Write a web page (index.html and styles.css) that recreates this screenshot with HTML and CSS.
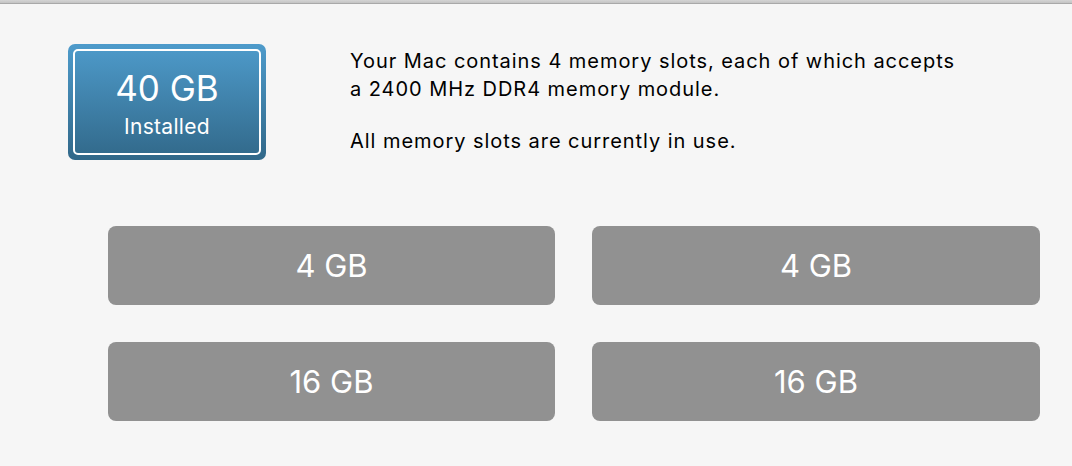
FILE: index.html
```html
<!DOCTYPE html>
<html>
<head>
<meta charset="utf-8">
<link rel="stylesheet" href="styles.css">
</head>
<body>
<div class="topbar"></div>
<main class="content">
  <section class="summary">
    <div class="badge">
      <div class="badge-inner">
        <div class="badge-size">40 GB</div>
        <div class="badge-label">Installed</div>
      </div>
    </div>
    <div class="info">
      <p>Your Mac contains 4 memory slots, each of which accepts<br>a 2400 MHz DDR4 memory module.</p>
      <p>All memory slots are currently in use.</p>
    </div>
  </section>
  <section class="slots">
    <div class="slot">4 GB</div>
    <div class="slot">4 GB</div>
    <div class="slot">16 GB</div>
    <div class="slot">16 GB</div>
  </section>
</main>
</body>
</html>
```
FILE: styles.css
```css
html, body {
  margin: 0;
  padding: 0;
  background: #f6f6f6;
  font-family: "Inter", "Liberation Sans", sans-serif;
}
.topbar {
  height: 3px;
  background: linear-gradient(#d4d4d4, #c4c4c4);
  border-bottom: 1px solid #a9a9a9;
}
.content {
  padding: 40px 0 0 68px;
}
.summary {
  display: flex;
  align-items: flex-start;
  gap: 84px;
}
.badge {
  width: 198px;
  height: 116px;
  box-sizing: border-box;
  border-radius: 7px;
  background: linear-gradient(#4e9bcb, #316889);
  padding: 5px;
  flex: none;
}
.badge-inner {
  height: 100%;
  box-sizing: border-box;
  border: 2px solid #ffffff;
  border-radius: 5px;
  display: flex;
  flex-direction: column;
  align-items: center;
  color: #fff;
  padding-top: 17px;
}
.badge-size {
  font-size: 35px;
  line-height: 40px;
}
.badge-label {
  font-size: 21px;
  line-height: 26px;
  letter-spacing: 0.3px;
  margin-top: 6px;
}
.info {
  padding-top: 3px;
  color: #000;
  font-size: 20px;
  letter-spacing: 0.95px;
  line-height: 28px;
}
.info p {
  margin: 0 0 24px 0;
}
.slots {
  margin: 47px 0 0 40px;
  display: grid;
  grid-template-columns: 447px 448px;
  grid-auto-rows: 79px;
  column-gap: 37px;
  row-gap: 37px;
}
.slot {
  background: #919191;
  border-radius: 8px;
  color: #fff;
  font-size: 31px;
  display: flex;
  align-items: center;
  justify-content: center;
}
```
